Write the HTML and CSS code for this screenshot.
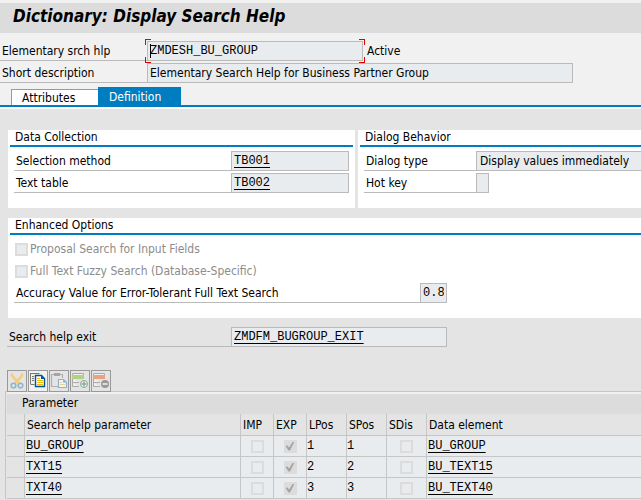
FILE: index.html
```html
<!DOCTYPE html>
<html lang="en">
<head>
<meta charset="utf-8">
<title>Dictionary: Display Search Help</title>
<link rel="stylesheet" href="styles.css">
</head>
<body>
<header class="titlebar"><h1>Dictionary: Display Search Help</h1></header>

<section class="object">
  <div class="row">
    <label class="label" for="name">Elementary srch hlp</label>
    <div class="focus"><input class="field mono" id="name" value="ZMDESH_BU_GROUP" readonly><i class="caret"></i><i class="corner tl"></i><i class="corner tr"></i><i class="corner bl"></i><i class="corner br"></i></div>
    <span class="status">Active</span>
  </div>
  <div class="row">
    <label class="label" for="desc">Short description</label>
    <input class="field description" id="desc" value="Elementary Search Help for Business Partner Group" readonly>
  </div>
</section>

<nav class="tabs">
  <button class="tab" type="button">Attributes</button>
  <button class="tab active" type="button">Definition</button>
</nav>

<main class="content">
  <div class="cards">
    <section class="card collection">
      <h2>Data Collection</h2>
      <div class="row">
        <label class="label" for="method">Selection method</label>
        <input class="field mono link grow" id="method" value="TB001" readonly>
      </div>
      <div class="row">
        <label class="label" for="texttable">Text table</label>
        <input class="field mono link grow" id="texttable" value="TB002" readonly>
      </div>
    </section>
    <section class="card behavior">
      <h2>Dialog Behavior</h2>
      <div class="row">
        <label class="label" for="dialog">Dialog type</label>
        <input class="field grow" id="dialog" value="Display values immediately" readonly>
      </div>
      <div class="row">
        <label class="label" for="hotkey">Hot key</label>
        <input class="field hotkey" id="hotkey" value="" readonly>
      </div>
    </section>
  </div>

  <section class="card options">
    <h2>Enhanced Options</h2>
    <label class="option"><input class="box" type="checkbox" disabled>Proposal Search for Input Fields</label>
    <label class="option"><input class="box" type="checkbox" disabled>Full Text Fuzzy Search (Database-Specific)</label>
    <div class="row">
      <label class="label" for="accuracy">Accuracy Value for Error-Tolerant Full Text Search</label>
      <input class="field mono accuracy" id="accuracy" value="0.8" readonly>
    </div>
  </section>

  <div class="row exit">
    <label class="label" for="exit">Search help exit</label>
    <input class="field mono link" id="exit" value="ZMDFM_BUGROUP_EXIT" readonly>
  </div>

  <div class="toolbar">
    <button class="tool" type="button" aria-label="Cut">
      <svg width="18" height="20" viewBox="0 0 18 20" fill="none"><path d="M3.500 2.500 5 6l6 6M14.500 2.500 13 6l-6 6" stroke="#f5cd7d" stroke-width="2.600"/><circle cx="5.500" cy="14.500" r="2.300" stroke="#8fb5cd" stroke-width="1.600"/><circle cx="12.500" cy="14.500" r="2.300" stroke="#8fb5cd" stroke-width="1.600"/></svg>
    </button>
    <button class="tool on" type="button" aria-label="Copy">
      <svg width="18" height="20" viewBox="0 0 18 20" fill="none"><path d="M1.500 2.500h9M1.500 2v11M3 5.500h2M3 7.500h2M3 9.500h2M1.500 13.500h4" stroke="#777"/><path d="M6.500 4.500h6l3 3v8h-9z" fill="#fff" stroke="#00578f" stroke-width="1.400"/><path d="M12 4.500v3.500h3.500z" fill="#00578f"/><path d="M8 7.500h3M8 9.500h6M8 11.500h6M8 13.500h6" stroke="#f2b90d"/></svg>
    </button>
    <button class="tool" type="button" aria-label="Paste">
      <svg width="18" height="20" viewBox="0 0 18 20" fill="none"><path d="M8 15.500H1.500v-12h11V7" stroke="#b0b0b0" stroke-width="1.200"/><path d="M4 2h6v3H4z" fill="#a5a5a5"/><path d="M8.500 8.500h5l3 3v5h-8z" fill="#f4f4f4" stroke="#8ab4cf" stroke-width="1.200"/><path d="M13 8.500v3h3.500z" fill="#8ab4cf"/><path d="M10 11.500h2M10 13.500h5" stroke="#eccf89"/></svg>
    </button>
    <button class="tool" type="button" aria-label="Insert row">
      <svg width="18" height="20" viewBox="0 0 18 20" fill="none"><path d="M1.500 2.500h11v5h-11zM8 11.500H1.500v-4M8 15.500H1.500v-4" fill="#eee" stroke="#aaa"/><path d="M1 4h12v4H1z" fill="#b5d184"/><circle cx="13" cy="13" r="3.500" fill="#eee" stroke="#84ad94"/><path d="M13 10.500v5M10.500 13h5" stroke="#84ad94" stroke-width="1.400"/></svg>
    </button>
    <button class="tool" type="button" aria-label="Delete row">
      <svg width="18" height="20" viewBox="0 0 18 20" fill="none"><path d="M1.500 2.500h11v5h-11zM8 11.500H1.500v-4M8 15.500H1.500v-4" fill="#eee" stroke="#aaa"/><path d="M1 4h12v4H1z" fill="#e8a284"/><circle cx="13" cy="13" r="4" fill="#999"/><path d="M10.500 13h5" stroke="#eee" stroke-width="1.600"/></svg>
    </button>
  </div>

  <div class="grid">
    <table>
      <caption>Parameter</caption>
      <colgroup><col class="c-sel"><col class="c-name"><col class="c-flag"><col class="c-flag"><col class="c-pos"><col class="c-pos"><col class="c-pos"><col></colgroup>
      <thead>
        <tr><th></th><th>Search help parameter</th><th>IMP</th><th>EXP</th><th>LPos</th><th>SPos</th><th>SDis</th><th>Data element</th></tr>
      </thead>
      <tbody>
        <tr><td></td><td><a href="#">BU_GROUP</a></td><td><input class="box" type="checkbox" aria-label="IMP" disabled></td><td><input class="box" type="checkbox" aria-label="EXP" checked disabled></td><td>1</td><td>1</td><td><input class="box" type="checkbox" aria-label="SDis" disabled></td><td><a href="#">BU_GROUP</a></td></tr>
        <tr><td></td><td><a href="#">TXT15</a></td><td><input class="box" type="checkbox" aria-label="IMP" disabled></td><td><input class="box" type="checkbox" aria-label="EXP" checked disabled></td><td>2</td><td>2</td><td><input class="box" type="checkbox" aria-label="SDis" disabled></td><td><a href="#">BU_TEXT15</a></td></tr>
        <tr><td></td><td><a href="#">TXT40</a></td><td><input class="box" type="checkbox" aria-label="IMP" disabled></td><td><input class="box" type="checkbox" aria-label="EXP" checked disabled></td><td>3</td><td>3</td><td><input class="box" type="checkbox" aria-label="SDis" disabled></td><td><a href="#">BU_TEXT40</a></td></tr>
      </tbody>
    </table>
  </div>
</main>
</body>
</html>
```
FILE: styles.css
```css
* { box-sizing: border-box; }

body {
  margin: 0;
  background: #e4e4e4;
  color: #000;
  font: 12px/16px "DejaVu Sans Condensed", "DejaVu Sans", sans-serif;
  overflow-x: hidden;
}

h1, h2 { margin: 0; }

.titlebar {
  border-top: 3px solid #f1f1f1;
  background: #dcdcdc;
  padding: 0 13px;
}
h1 { font-size: 17px; line-height: 26px; padding-bottom: 4px; font-style: italic; }

.object {
  background: #f1f1f1;
  padding: 8px 0 4px;
  display: flex;
  flex-direction: column;
  gap: 2px;
}

/* label + field rows */
.row { display: flex; height: 20px; }
.label {
  flex: none;
  border-bottom: 1px solid #bababa;
  padding: 2px 2px 0;
  white-space: nowrap;
}
.field {
  min-width: 0;
  height: 20px;
  margin: 0;
  padding: 0 2px;
  border: 1px solid #bababa;
  border-radius: 0;
  background: #e8ecef;
  color: #000;
  font: inherit;
  outline: none;
}
.mono { font-family: "Liberation Mono", monospace; }
.link { text-decoration: underline 1px; text-underline-offset: 3px; }
.grow { flex: 1; }

.object .label { width: 147px; }
.object .mono { width: 100%; }
.description { width: 426px; }
.status { padding: 2px 4px; }

/* cursor and focus corners around the first field */
.focus { position: relative; width: 216px; }
.caret { position: absolute; left: 3px; top: 3px; width: 1px; height: 14px; background: #000; }
.corner { position: absolute; width: 6px; height: 6px; border: 0 solid #e00000; }
.tl { left: -2px; top: -2px; border-width: 1px 0 0 1px; }
.tr { right: -2px; top: -2px; border-width: 1px 1px 0 0; }
.bl { left: -2px; bottom: -2px; border-width: 0 0 1px 1px; }
.br { right: -2px; bottom: -2px; border-width: 0 1px 1px 0; }

.tabs {
  display: flex;
  align-items: flex-end;
  background: #f1f1f1;
  border-bottom: 2px solid #007cc0;
  padding-left: 11px;
}
.tab {
  width: 87px;
  height: 16px;
  padding: 0 10px;
  border: 1px solid #999;
  border-width: 1px 0 0 1px;
  background: #fff;
  color: #000;
  font: inherit;
  text-align: left;
}
.tab.active {
  width: 83px;
  height: 18px;
  padding: 2px 11px 0;
  border: 0;
  background: #007cc0;
  color: #fff;
}

.content { border-top: 2px solid #fff; padding: 21px 0 0; }

.cards {
  display: grid;
  grid-template-columns: 347px 1fr;
  gap: 3px;
  padding-left: 8px;
}
.card { background: #fff; display: flex; flex-direction: column; gap: 2px; }
.card h2 {
  margin: 0 2px 2px;
  padding-left: 5px;
  border-bottom: 2px solid #007cc0;
  font-size: 12px;
  font-weight: normal;
  line-height: 15px;
}
.card .row { margin-left: 6px; }
.cards .card { padding-bottom: 15px; }
.collection .row { margin-right: 6px; }
.collection .label { width: 217px; }
.behavior h2 { margin-right: 0; }
.behavior .label { width: 112px; }
.behavior .field { padding-left: 3px; }
.behavior .grow { border-right: 0; }
.hotkey { width: 13px; }

.options { margin: 10px 0 9px 8px; padding-bottom: 15px; }
.options h2 { margin-right: 0; }
.option {
  display: flex;
  align-items: center;
  gap: 2px;
  height: 20px;
  padding-left: 7px;
  color: #8c8c8c;
}
.options .label { width: 406px; }
.accuracy { width: 27px; }

.exit { margin-left: 7px; }
.exit .label { width: 224px; }
.exit .field { width: 216px; }

.box {
  appearance: none;
  flex: none;
  display: block;
  position: relative;
  width: 13px;
  height: 13px;
  margin: 0;
  border: 2px solid #dcdcdc;
  background: #e8ecef;
}
.box:checked { background: #dcdcdc; }
.box:checked::after {
  content: "";
  position: absolute;
  inset: 0;
  background: #a4a4a4;
  clip-path: polygon(0 50%, 18% 42%, 40% 66%, 82% 0, 100% 0, 50% 100%, 34% 100%);
}

.toolbar { display: flex; gap: 1px; padding: 23px 0 0 7px; height: 44px; }
.tool {
  width: 20px;
  height: 22px;
  padding: 0;
  border: 1px solid #999;
  background: #e4e4e4;
}
.tool.on { background: #f1f1f1; }
.tool svg { display: block; }

.grid {
  margin-left: 5px;
  border: solid #c6c6c6;
  border-width: 1px 0 0 1px;
  padding-left: 1px;
}
table {
  width: 100%;
  table-layout: fixed;
  border-collapse: separate;
  border-spacing: 0;
}
caption {
  border-top: 2px solid #f1f1f1;
  background: #dcdcdc;
  padding: 1px 15px 3px;
  text-align: left;
}
.c-sel { width: 18px; }
.c-name { width: 216px; }
.c-flag { width: 33px; }
.c-pos { width: 40px; }
th, td {
  height: 21px;
  padding: 0;
  border: solid #c6c6c6;
  border-width: 0 1px 1px 0;
  text-align: left;
  white-space: nowrap;
}
th:last-child, td:last-child { border-right: 0; }
th { height: 22px; padding-left: 2px; font-weight: normal; }
td { background: #e8ecef; font-family: "Liberation Mono", monospace; }
td:first-child { background: #e4e4e4; }
td .box { margin: 0 auto; }
td a { color: #000; text-decoration: underline 1px; text-underline-offset: 3px; padding-left: 1px; }
```
